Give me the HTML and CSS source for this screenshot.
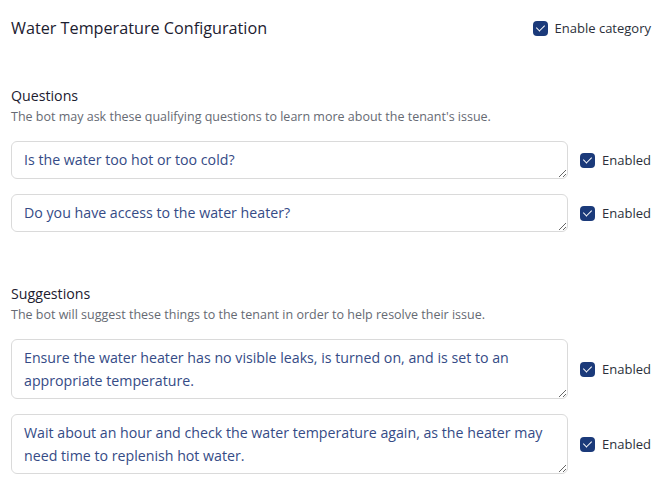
FILE: index.html
```html
<!DOCTYPE html>
<html lang="en">
<head>
    <meta charset="UTF-8">
    <meta name="viewport" content="width=device-width, initial-scale=1.0">
    <title>Water Temperature Configuration</title>
    <link rel="stylesheet" href="styles.css">
</head>
<body>

    <div class="header">
        <h2>Water Temperature Configuration</h2>
        <label class="check">
            <input type="checkbox" checked>
            <span class="box"></span>
            Enable category
        </label>
    </div>

    <div class="section">
        <h3>Questions</h3>
        <p class="hint">The bot may ask these qualifying questions to learn more about the tenant's issue.</p>

        <div class="item">
            <textarea class="short">Is the water too hot or too cold?</textarea>
            <label class="check">
                <input type="checkbox" checked>
                <span class="box"></span>
                Enabled
            </label>
        </div>
        <div class="item">
            <textarea class="short">Do you have access to the water heater?</textarea>
            <label class="check">
                <input type="checkbox" checked>
                <span class="box"></span>
                Enabled
            </label>
        </div>
    </div>

    <div class="section">
        <h3>Suggestions</h3>
        <p class="hint">The bot will suggest these things to the tenant in order to help resolve their issue.</p>

        <div class="item">
            <textarea class="long">Ensure the water heater has no visible leaks, is turned on, and is set to an appropriate temperature.</textarea>
            <label class="check">
                <input type="checkbox" checked>
                <span class="box"></span>
                Enabled
            </label>
        </div>
        <div class="item">
            <textarea class="long">Wait about an hour and check the water temperature again, as the heater may need time to replenish hot water.</textarea>
            <label class="check">
                <input type="checkbox" checked>
                <span class="box"></span>
                Enabled
            </label>
        </div>
    </div>

</body>
</html>
```

FILE: styles.css
```css
* {
    box-sizing: border-box;
}

body {
    font-family: "Open Sans", "Noto Sans", sans-serif;
    color: #1c2030;
    background-color: #fff;
    margin: 0;
    padding: 16px 19px 0 11px;
}

/* top row */
.header {
    display: flex;
    align-items: center;
    justify-content: space-between;
    height: 24px;
}

h2 {
    font-size: 16.2px;
    font-weight: 500;
    line-height: 24px;
    margin: 0;
}

/* sections */
.section {
    margin-top: 46px;
}

.section + .section {
    margin-top: 52px;
}

h3 {
    font-size: 14.2px;
    font-weight: 500;
    line-height: 20px;
    margin: 0 0 3px;
}

.hint {
    font-size: 12.5px;
    line-height: 16px;
    color: #666a73;
    margin: 0 0 16px;
}

.item {
    display: flex;
    align-items: center;
    gap: 12px;
    margin-bottom: 15px;
}

textarea {
    flex: 1;
    font-family: inherit;
    font-size: 14.2px;
    line-height: 23px;
    color: #354b86;
    padding: 6px 12px;
    border: 1px solid #dadada;
    border-radius: 6px;
    resize: vertical;
    overflow: hidden;
    outline: none;
}

textarea.short {
    height: 38px;
}

textarea.long {
    height: 60px;
}

/* checkbox */
.check {
    display: flex;
    align-items: center;
    gap: 7px;
    font-size: 13px;
    color: #2b2f3a;
    white-space: nowrap;
    cursor: pointer;
}

.check input {
    display: none;
}

.box {
    width: 15px;
    height: 15px;
    border-radius: 4px;
    background-color: #1b3a7a;
    position: relative;
}

.box::after {
    content: "";
    position: absolute;
    left: 5px;
    top: 2.5px;
    width: 4px;
    height: 7px;
    border: solid #fff;
    border-width: 0 1.5px 1.5px 0;
    transform: rotate(45deg);
}
```
